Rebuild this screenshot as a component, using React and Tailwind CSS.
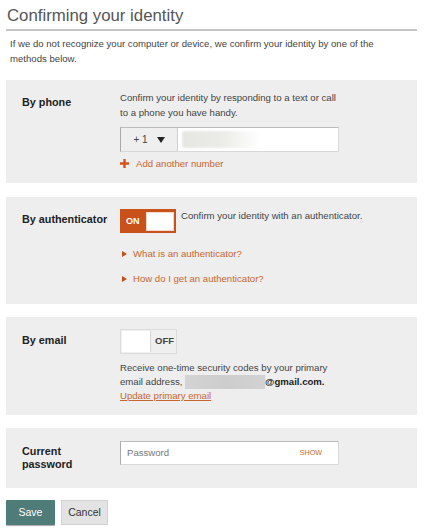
export default function App() {
  return (
    <div className="h-[529px] w-[428px] overflow-hidden bg-white font-['Liberation_Sans',Arial,sans-serif] text-[#444]">
      <div className="ml-[6px] w-[411px] pt-[6px]">
        <h1 className="border-b-2 border-[#c4c4c4] pb-[3px] pl-px text-[16.8px] leading-[20px] text-[#555]">
          Confirming your identity
        </h1>
        <p className="mt-[5px] pl-[4px] pr-[30px] text-[9.6px] leading-[15px]">
          If we do not recognize your computer or device, we confirm your identity by one of the methods below.
        </p>

        {/* phone */}
        <section className="mt-[14px] flex bg-[#eee] pb-[12px] pl-[16px] pt-[10px]">
          <div className="w-[98px] shrink-0 pt-[5px] text-[10.8px] font-bold leading-[15px] text-[#222]">By phone</div>
          <div>
            <p className="w-[220px] text-[9.6px] leading-[15px]">
              Confirm your identity by responding to a text or call to a phone you have handy.
            </p>
            <div className="mt-[7px] flex h-[25px] w-[219px] border border-[#d8d8d8] border-l-[#aaa] border-t-[#bbb] bg-white">
              <div className="flex w-[57px] items-center justify-center gap-[9px] border-r border-[#cfcfcf] bg-[#efefef] text-[10px] text-[#444]">
                <span>+ 1</span>
                <span className="h-0 w-0 border-x-[4.5px] border-t-[6px] border-x-transparent border-t-[#222]" />
              </div>
              <div className="ml-[4px] flex items-center">
                <div className="h-[17px] w-[78px] rounded-[3px] bg-gradient-to-r from-[#e6e6e3] via-[#ebebe8] to-white blur-[1px]" />
              </div>
            </div>
            <div className="mt-[4px] flex items-center gap-[7px] text-[9.6px] leading-[15px] text-[#c8662f]">
              <svg width="9" height="9" viewBox="0 0 9 9">
                <path d="M4.5 0v9M0 4.5h9" stroke="#d2521c" strokeWidth="2.4" />
              </svg>
              Add another number
            </div>
          </div>
        </section>

        {/* authenticator */}
        <section className="mt-[14px] flex bg-[#eee] pb-[18px] pl-[16px] pt-[12px]">
          <div className="w-[98px] shrink-0 pt-[3px] text-[10.8px] font-bold leading-[15px] text-[#222]">By authenticator</div>
          <div>
            <div className="flex items-start">
              <div className="flex h-[24px] w-[56px] shrink-0 items-center bg-[#c9521b] pb-[2px] pl-[6px] pr-[2px] pt-[3px]">
                <span className="text-[9px] font-bold text-white">ON</span>
                <span className="ml-auto h-[19px] w-[28px] border border-[#f3d9cc] bg-white" />
              </div>
              <p className="-mt-[1px] ml-[5px] text-[9.6px] leading-[15px]">Confirm your identity with an authenticator.</p>
            </div>
            <div className="mt-[13px] flex flex-col gap-[10px] text-[9.6px] leading-[15px] text-[#c8662f]">
              <div className="flex items-center">
                <span className="ml-[2px] h-0 w-0 border-y-[3.5px] border-l-[5px] border-y-transparent border-l-[#c0501a]" />
                <span className="ml-[6px]">What is an authenticator?</span>
              </div>
              <div className="flex items-center">
                <span className="ml-[2px] h-0 w-0 border-y-[3.5px] border-l-[5px] border-y-transparent border-l-[#c0501a]" />
                <span className="ml-[6px]">How do I get an authenticator?</span>
              </div>
            </div>
          </div>
        </section>

        {/* email */}
        <section className="mt-[13px] flex bg-[#eee] pb-[12px] pl-[16px] pt-[12px]">
          <div className="w-[98px] shrink-0 pt-[4px] text-[10.8px] font-bold leading-[15px] text-[#222]">By email</div>
          <div>
            <div className="flex h-[25px] w-[57px] items-center border border-[#dcdcdc] bg-[#efefef] p-[1px]">
              <span className="h-full w-[29px] border-r border-[#d6d6d6] bg-white" />
              <span className="ml-[4px] text-[9.5px] font-bold text-[#444]">OFF</span>
            </div>
            <p className="mt-[7px] w-[220px] text-[9.6px] leading-[14px]">
              Receive one-time security codes by your primary email address,{' '}
              <span className="inline-block h-[14px] w-[80px] bg-gradient-to-r from-[#d4d4d4] via-[#cdcdcd] to-[#d2d2d2] align-top" />
              <b className="text-[#222]">@gmail.com.</b>
            </p>
            <a className="block text-[9.6px] leading-[14px] text-[#c8662f] underline">Update primary email</a>
          </div>
        </section>

        {/* password */}
        <section className="mt-[13px] flex items-start bg-[#eee] pb-[17px] pl-[16px] pt-[13px]">
          <div className="w-[98px] shrink-0 pt-[4px] text-[10.8px] font-bold leading-[13px] text-[#222]">
            Current
            <br />
            password
          </div>
          <div className="flex h-[24px] w-[219px] items-center justify-between border border-[#d8d8d8] border-l-[#aaa] border-t-[#bbb] bg-white pl-[6px] pr-[16px]">
            <span className="text-[9.6px] text-[#777]">Password</span>
            <span className="text-[7.2px] text-[#c8662f]">SHOW</span>
          </div>
        </section>

        <div className="mt-[12px] flex gap-[6px]">
          <button className="h-[25px] w-[49px] rounded-[1px] bg-[#4f7b79] text-[10.5px] text-white shadow-[0_1px_1px_rgba(0,0,0,0.35)]">
            Save
          </button>
          <button className="h-[25px] w-[47px] border border-[#d2d2d2] bg-[#e3e3e3] text-[10.5px] text-[#333]">
            Cancel
          </button>
        </div>
      </div>
    </div>
  );
}
